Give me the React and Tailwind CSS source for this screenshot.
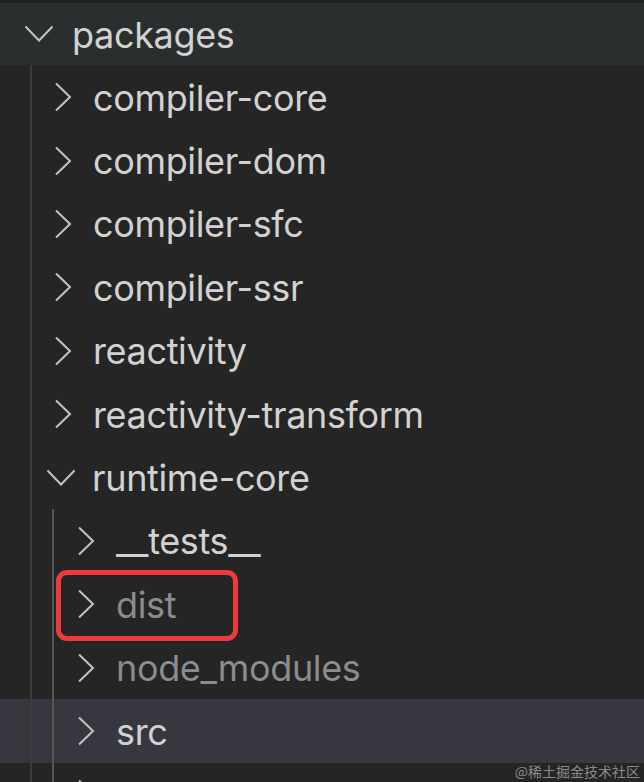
import React from 'react';

const ROWS = [
  { name: 'compiler-core', level: 1 },
  { name: 'compiler-dom', level: 1 },
  { name: 'compiler-sfc', level: 1 },
  { name: 'compiler-ssr', level: 1 },
  { name: 'reactivity', level: 1 },
  { name: 'reactivity-transform', level: 1 },
  { name: 'runtime-core', level: 1, open: true },
  { name: '__tests__', level: 2 },
  { name: 'dist', level: 2, ignored: true },
  { name: 'node_modules', level: 2, ignored: true },
  { name: 'src', level: 2, selected: true },
  { name: 'types', level: 2 },
];

function Chevron({ open }) {
  if (open) {
    return (
      <svg width="30" height="18" viewBox="0 0 30 18" className="shrink-0">
        <polyline points="1.5,1.5 15,15.5 28.5,1.5" fill="none" stroke="#c4c4c4" strokeWidth="2" />
      </svg>
    );
  }
  return (
    <svg width="18" height="30" viewBox="0 0 18 30" className="shrink-0">
      <polyline points="2,1.5 16,15 2,28.5" fill="none" stroke="#c4c4c4" strokeWidth="2" />
    </svg>
  );
}

function Row({ row }) {
  const pad = row.level === 1 ? (row.open ? 'pl-[46px]' : 'pl-[54px]') : 'pl-[77px]';
  const textPad = row.open ? 'ml-[16px]' : 'ml-[21px]';
  return (
    <div
      className={`h-[63.4px] flex items-center ${pad} ${row.selected ? 'bg-[#37373f]' : ''}`}
    >
      <Chevron open={row.open} />
      <span
        className={`${textPad} text-[36px] leading-none tracking-[-0.35px] pt-[1px] ${
          row.ignored ? 'text-[#8c8c8c]' : 'text-[#d2d2d2]'
        }`}
      >
        {row.name}
      </span>
    </div>
  );
}

export default function App() {
  return (
    <div className="w-[644px] h-[782px] bg-[#252525] overflow-hidden relative font-['Inter',sans-serif]">
      <div className="h-[3px] bg-[#1e2223]" />
      <div className="h-[62px] bg-[#2a2e2f] flex items-center pl-[24px]">
        <Chevron open />
        <span className="ml-[18px] text-[36px] leading-none tracking-[-0.35px] pt-[1px] text-[#d2d2d2]">
          packages
        </span>
      </div>
      <div className="relative pt-[0.5px]">
        {ROWS.map((r) => (
          <Row key={r.name} row={r} />
        ))}
        <div className="absolute left-[30px] top-0 bottom-0 w-[2px] bg-[#3b3b3b]" />
        <div className="absolute left-[52px] top-[444px] bottom-0 w-[2px] bg-[#575757]" />
        <div className="absolute left-[56px] top-[505px] w-[182px] h-[71px] border-[5px] border-[#f0393d] rounded-[11px]" />
      </div>
      <div className="absolute right-[4px] bottom-[4px] text-[14px] leading-none text-[#8a8a8a] font-['Noto_Sans_CJK_SC',sans-serif]">
        @稀土掘金技术社区
      </div>
    </div>
  );
}
